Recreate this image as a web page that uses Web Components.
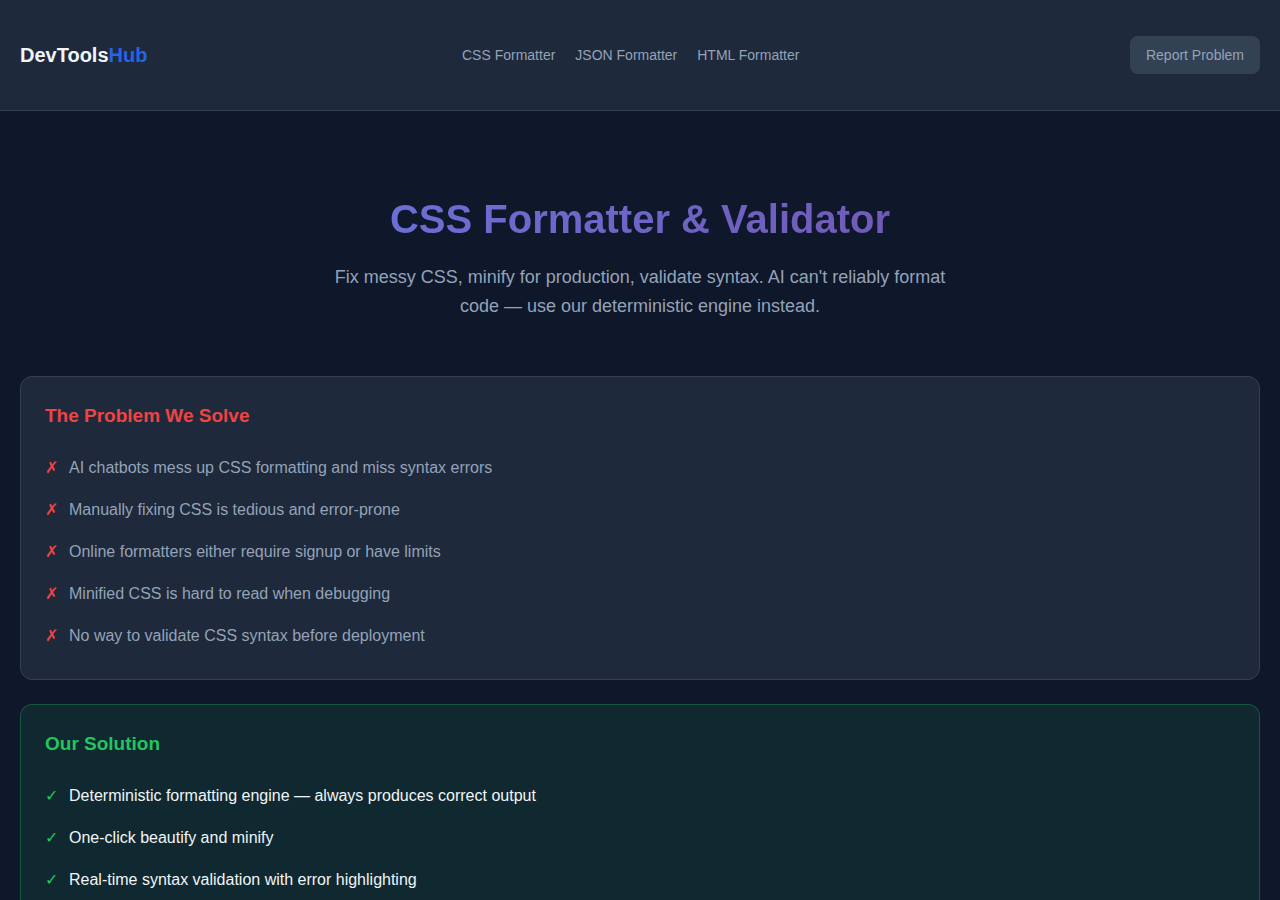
<!DOCTYPE html>
<html lang="en">
<head>
<meta charset="utf-8">
<meta name="viewport" content="width=device-width, initial-scale=1">
<title>CSS Formatter &amp; Validator - DevToolsHub</title>
<style>
  :root {
    --bg: #0f172a;
    --surface: #1e293b;
    --border: #334155;
    --text: #f1f5f9;
    --muted: #94a3b8;
    --primary: #2563eb;
    --danger: #ef4444;
    --success: #22c55e;
  }
  body {
    margin: 0;
    background: var(--bg);
    color: var(--text);
    font: 16px/26px "Liberation Sans", Arial, sans-serif;
  }
  main {
    display: flex;
    flex-direction: column;
    gap: 24px;
    padding: 0 20px 24px;
  }
</style>
</head>
<body>
<site-header>
  <nav-link href="#css">CSS Formatter</nav-link>
  <nav-link href="#json">JSON Formatter</nav-link>
  <nav-link href="#html">HTML Formatter</nav-link>
</site-header>
<main>
  <page-hero>
    <span slot="title">CSS Formatter &amp; Validator</span>
    Fix messy CSS, minify for production, validate syntax. AI can't reliably format code — use our deterministic engine instead.
  </page-hero>
  <info-card kind="problem">
    <span slot="title">The Problem We Solve</span>
    <info-item mark="✗">AI chatbots mess up CSS formatting and miss syntax errors</info-item>
    <info-item mark="✗">Manually fixing CSS is tedious and error-prone</info-item>
    <info-item mark="✗">Online formatters either require signup or have limits</info-item>
    <info-item mark="✗">Minified CSS is hard to read when debugging</info-item>
    <info-item mark="✗">No way to validate CSS syntax before deployment</info-item>
  </info-card>
  <info-card kind="solution">
    <span slot="title">Our Solution</span>
    <info-item mark="✓">Deterministic formatting engine — always produces correct output</info-item>
    <info-item mark="✓">One-click beautify and minify</info-item>
    <info-item mark="✓">Real-time syntax validation with error highlighting</info-item>
  </info-card>
</main>

<script>
class BaseElement extends HTMLElement {
  constructor() {
    super();
    this.attachShadow({ mode: "open" }).innerHTML = this.constructor.markup;
  }
}

class SiteHeader extends BaseElement {
  static markup = `
    <style>
      :host { display: block; background: var(--surface); border-bottom: 1px solid var(--border); }
      header { display: flex; flex-wrap: wrap; align-items: center; justify-content: space-between; gap: 16px 0; padding: 36px 20px; }
      .logo { color: var(--text); font-size: 20px; font-weight: 700; text-decoration: none; }
      .logo span { color: var(--primary); }
      nav { display: flex; flex-wrap: wrap; gap: 8px 20px; margin-right: 16px; }
      button { padding: 8px 16px; border: 0; border-radius: 8px; background: var(--border); color: var(--muted); font: inherit; font-size: 14px; line-height: 22px; cursor: pointer; }
    </style>
    <header>
      <a class="logo" href="#">DevTools<span>Hub</span></a>
      <nav aria-label="Tools"><slot></slot></nav>
      <button type="button">Report Problem</button>
    </header>`;
}

class NavLink extends BaseElement {
  static markup = `
    <style>
      :host { display: block; font-size: 14px; line-height: 22px; }
      a { color: var(--muted); text-decoration: none; }
      a:hover { color: var(--text); }
    </style>
    <a><slot></slot></a>`;
  connectedCallback() {
    this.shadowRoot.querySelector("a").href = this.getAttribute("href");
  }
}

class PageHero extends BaseElement {
  static markup = `
    <style>
      :host { display: block; padding: 84px 0 31px; text-align: center; }
      h1 { margin: 0 0 20px; font-size: 40px; line-height: 48px; color: transparent;
           background: linear-gradient(135deg, #667eea 0%, #764ba2 100%); background-clip: text; -webkit-background-clip: text; }
      p { max-width: 620px; margin: 0 auto; color: var(--muted); font-size: 18px; line-height: 29px; }
    </style>
    <h1><slot name="title"></slot></h1>
    <p><slot></slot></p>`;
}

class InfoCard extends BaseElement {
  static markup = `
    <style>
      :host { display: block; padding: 24px 24px 22px; border: 1px solid var(--border); border-radius: 12px;
              background: var(--surface); color: var(--muted); --accent: var(--danger); }
      :host([kind="solution"]) { background: rgba(34, 197, 94, 0.1); border-color: rgba(34, 197, 94, 0.3);
              color: var(--text); --accent: var(--success); }
      h2 { margin: 0 0 16px; color: var(--accent); font-size: 19px; line-height: 30px; }
    </style>
    <h2><slot name="title"></slot></h2>
    <div role="list"><slot></slot></div>`;
}

class InfoItem extends BaseElement {
  static markup = `
    <style>
      :host { display: grid; grid-template-columns: 24px 1fr; padding: 8px 0; line-height: 26px; }
      .mark { color: var(--accent); }
    </style>
    <span class="mark" aria-hidden="true"></span>
    <span><slot></slot></span>`;
  connectedCallback() {
    this.setAttribute("role", "listitem");
    this.shadowRoot.querySelector(".mark").textContent = this.getAttribute("mark");
  }
}

customElements.define("site-header", SiteHeader);
customElements.define("nav-link", NavLink);
customElements.define("page-hero", PageHero);
customElements.define("info-card", InfoCard);
customElements.define("info-item", InfoItem);
</script>
</body>
</html>
